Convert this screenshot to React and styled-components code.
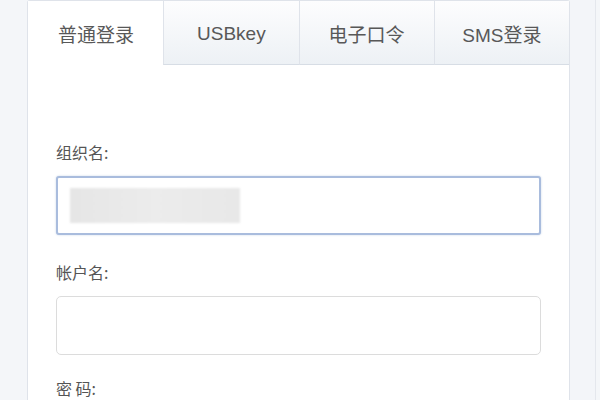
import React from "react";
import styled, { createGlobalStyle } from "styled-components";

const Global = createGlobalStyle`
  html, body { margin: 0; padding: 0; }
  body {
    background: #f4f6f9;
    font-family: "Noto Sans CJK SC", "Liberation Sans", sans-serif;
    color: #555;
  }
`;

const Page = styled.div`
  width: 600px;
  height: 400px;
  overflow: hidden;
  display: flex;
  padding-left: 27px;
  box-sizing: border-box;
`;

const Panel = styled.div`
  width: 543px;
  height: 420px;
  background: #fff;
  border: 1px solid #dfe3ea;
  border-bottom: none;
  border-radius: 3px 3px 0 0;
  box-sizing: border-box;
  display: flex;
  flex-direction: column;
`;

const RightStrip = styled.div`
  width: 25px;
  height: 400px;
  border-right: 1px solid #e4e7ed;
  background: #f3f5f9;
`;

const Tabs = styled.div`
  display: flex;
  height: 64px;
`;

const Tab = styled.div`
  flex: 1;
  display: flex;
  align-items: center;
  justify-content: center;
  font-size: 19px;
  color: #585858;
  font-family: "Liberation Sans", "Noto Sans CJK SC", sans-serif;
  box-sizing: border-box;
  background: ${(p) => (p.$active ? "#fff" : "linear-gradient(#fdfdfe, #edf1f5)")};
  border-bottom: 1px solid ${(p) => (p.$active ? "transparent" : "#d7dde5")};
  border-left: 1px solid ${(p) => (p.$first ? "transparent" : "#dfe3ea")};
  padding-top: 2px;
`;

const Form = styled.div`
  display: flex;
  flex-direction: column;
  padding: 77px 28px 0 28px;
`;

const Label = styled.div`
  font-size: 16px;
  line-height: 20px;
  color: #555;
  margin-bottom: ${(p) => p.$gap || 0}px;
  margin-top: ${(p) => p.$top || 0}px;
`;

const Field = styled.div`
  height: 59px;
  box-sizing: border-box;
  border-radius: ${(p) => (p.$focus ? "3px" : "5px")};
  border: ${(p) => (p.$focus ? "2px solid #a9bcdd" : "1px solid #dcdcdc")};
  box-shadow: ${(p) => (p.$focus ? "0 0 2px rgba(120,150,200,.45)" : "none")};
  display: flex;
  align-items: center;
  padding-left: 12px;
  background: #fff;
`;

const Redacted = styled.div`
  width: 170px;
  height: 35px;
  background: linear-gradient(90deg, #e6e6e6, #ececec 50%, #e8e8e8);
  filter: blur(0.8px);
`;

export default function App() {
  const tabs = ["普通登录", "USBkey", "电子口令", "SMS登录"];
  return (
    <>
      <Global />
      <Page>
        <Panel>
          <Tabs>
            {tabs.map((t, i) => (
              <Tab key={t} $active={i === 0} $first={i === 0}>
                {t}
              </Tab>
            ))}
          </Tabs>
          <Form>
            <Label $gap={14}>组织名:</Label>
            <Field $focus>
              <Redacted />
            </Field>
            <Label $top={27} $gap={14}>帐户名:</Label>
            <Field />
            <Label $top={23}>密 码:</Label>
          </Form>
        </Panel>
        <RightStrip />
      </Page>
    </>
  );
}
